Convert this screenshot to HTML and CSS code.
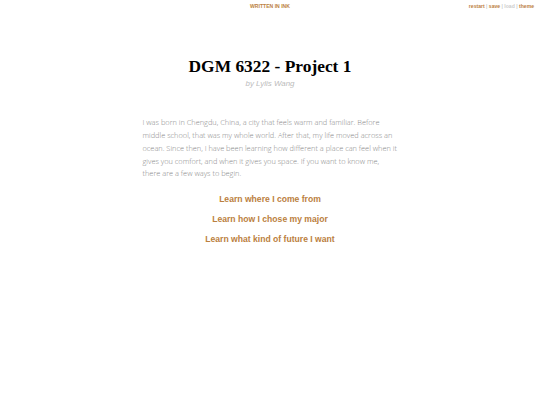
FILE: index.html
```html
<!DOCTYPE html>
<html>
<head>
<meta charset="utf-8">
<title>DGM 6322 - Project 1</title>
<link rel="stylesheet" href="styles.css">
</head>
<body>
<h1 class="written-in-ink">WRITTEN IN INK</h1>
<div class="controls">
  <a class="ctl" href="#">restart</a><span class="sep"> | </span><a class="ctl" href="#">save</a><span class="sep"> | </span><a class="ctl disabled" href="#">load</a><span class="sep"> | </span><a class="ctl" href="#">theme</a>
</div>
<div class="container">
  <div class="header">
    <h1 class="title">DGM 6322 - Project 1</h1>
    <h2 class="byline">by Lylis Wang</h2>
  </div>
  <div class="story">
    <p class="text">I was born in Chengdu, China, a city that feels warm and familiar. Before middle school, that was my whole world. After that, my life moved across an ocean. Since then, I have been learning how different a place can feel when it gives you comfort, and when it gives you space. If you want to know me, there are a few ways to begin.</p>
    <p class="choice"><a href="#">Learn where I come from</a></p>
    <p class="choice"><a href="#">Learn how I chose my major</a></p>
    <p class="choice"><a href="#">Learn what kind of future I want</a></p>
  </div>
</div>
</body>
</html>
```
FILE: styles.css
```css
html, body {
  margin: 0;
  padding: 0;
  background: #fff;
}
body {
  font-family: "Open Sans", sans-serif;
  font-weight: 300;
  width: 540px;
  height: 405px;
  position: relative;
}
.written-in-ink {
  margin: 0;
  padding: 3px 0 3px;
  text-align: center;
  font-family: "Liberation Sans", Arial, sans-serif;
  font-size: 5.1px;
  font-weight: 700;
  color: #bb8040;
  line-height: 1.2;
}
.controls {
  position: absolute;
  top: 2px;
  right: 6px;
  font-family: "Liberation Sans", Arial, sans-serif;
  font-size: 5.1px;
  line-height: 1.2;
  padding-top: 1px;
  color: #999;
}
.ctl {
  color: #bb8040;
  font-weight: 700;
  text-decoration: none;
}
.ctl.disabled {
  color: #ccc;
}
.sep {
  color: #aaa;
}
.container {
  width: 255px;
  margin: 0 auto;
  padding-top: 44px;
}
.header {
  text-align: center;
  padding-bottom: 28px;
}
.title {
  margin: 0 0 2px;
  font-family: "Liberation Serif", "Times New Roman", serif;
  font-weight: 700;
  font-size: 17.4px;
  line-height: 1.2;
  color: #000;
}
.byline {
  margin: 0;
  font-family: "Liberation Sans", Arial, sans-serif;
  font-style: italic;
  font-weight: 400;
  font-size: 7.9px;
  line-height: 1.2;
  color: #bbb;
}
.text {
  margin: 0 0 9px;
  font-size: 7.4px;
  line-height: 12.75px;
  color: #888;
}
.choice {
  margin: 0;
  text-align: center;
  font-size: 8.6px;
  line-height: 20px;
}
.choice a {
  font-family: "Liberation Sans", Arial, sans-serif;
  font-weight: 700;
  color: #bb8040;
  text-decoration: none;
}
```
